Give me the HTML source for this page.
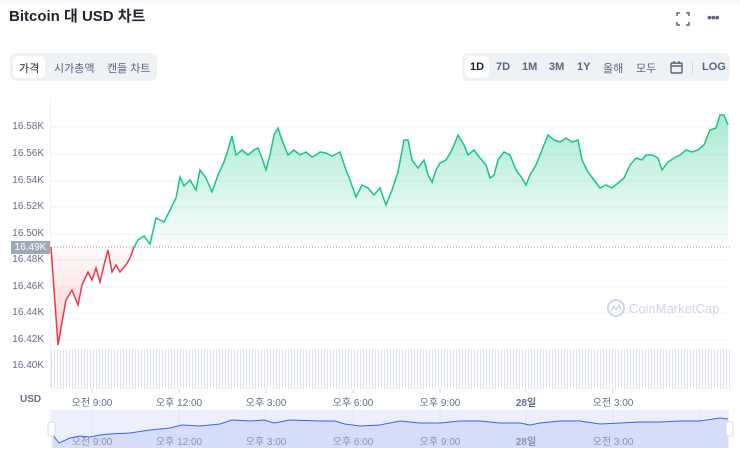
<!DOCTYPE html><html><head><meta charset="utf-8"><style>
body{margin:0;width:740px;height:454px;background:#fff;font-family:"Liberation Sans","Noto Sans CJK KR",sans-serif;position:relative;overflow:hidden;color:#222531}
.a{position:absolute}
.yl{position:absolute;left:0;width:44px;text-align:right;font-size:10px;color:#616e85}
.xl{position:absolute;top:394px;font-size:10px;color:#616e85;transform:translateX(-50%);white-space:nowrap}
.tab{position:absolute;font-size:11px;color:#58667e}
</style></head><body>
<div class="a" style="left:0;top:0;width:740px;height:6px;background:linear-gradient(#f4f4f6,#fff)"></div>
<div class="a" style="left:9px;top:5px;font-size:15px;font-weight:bold">Bitcoin 대 USD 차트</div>
<svg class="a" style="left:676px;top:12px" width="14" height="14" viewBox="0 0 14 14" fill="none" stroke="#58667e" stroke-width="1.5"><path d="M1 4V1h3M10 1h3v3M13 10v3h-3M4 13H1v-3"/></svg>
<div class="a" style="left:707px;top:9px;font-size:14px;color:#58667e;letter-spacing:-1px">•••</div>
<div class="a" style="left:10px;top:53px;width:147px;height:28px;background:#eff2f5;border-radius:6px"></div>
<div class="a" style="left:13px;top:56px;width:32px;height:22px;background:#fff;border-radius:5px"></div>
<div class="tab" style="left:19px;top:60px;color:#222531">가격</div>
<div class="tab" style="left:54px;top:60px">시가총액</div>
<div class="tab" style="left:107px;top:60px">캔들 차트</div>
<div class="a" style="left:462px;top:53px;width:268px;height:28px;background:#eff2f5;border-radius:6px"></div>
<div class="a" style="left:465px;top:56px;width:24px;height:22px;background:#fff;border-radius:5px"></div>
<div class="tab" style="left:470px;top:61px;font-weight:bold;color:#222531">1D</div>
<div class="tab" style="left:496px;top:61px;font-weight:bold">7D</div>
<div class="tab" style="left:522px;top:61px;font-weight:bold">1M</div>
<div class="tab" style="left:549px;top:61px;font-weight:bold">3M</div>
<div class="tab" style="left:577px;top:61px;font-weight:bold">1Y</div>
<div class="tab" style="left:603px;top:60px">올해</div>
<div class="tab" style="left:636px;top:60px">모두</div>
<svg class="a" style="left:670px;top:61px" width="13" height="13" viewBox="0 0 13 13" fill="none" stroke="#58667e" stroke-width="1.4"><rect x="1" y="2" width="11" height="10" rx="1"/><path d="M1 5h11M4 0v3M9 0v3"/></svg>
<div class="a" style="left:692px;top:61px;width:1px;height:13px;background:#cfd6e4"></div>
<div class="tab" style="left:702px;top:61px;font-weight:bold">LOG</div>

<div class="a" style="left:50px;top:100px;width:1px;height:290px;background:#eff2f5"></div>
<div class="yl" style="top:121px">16.58K</div><div class="yl" style="top:148px">16.56K</div><div class="yl" style="top:175px">16.54K</div><div class="yl" style="top:201px">16.52K</div><div class="yl" style="top:228px">16.50K</div><div class="yl" style="top:254px">16.48K</div><div class="yl" style="top:281px">16.46K</div><div class="yl" style="top:307px">16.44K</div><div class="yl" style="top:334px">16.42K</div><div class="yl" style="top:360px">16.40K</div>
<div class="a" style="left:11px;top:241px;width:39px;height:13px;background:#a1a7bb;color:#fff;font-size:10px;text-align:center;line-height:13px">16.49K</div>
<div class="a" style="left:51px;top:350px;width:679px;height:39px;background:repeating-linear-gradient(90deg,#dde1ea 0 1px,transparent 1px 3px)"></div>
<svg class="a" style="left:0;top:0" width="740" height="454">
<defs><linearGradient id="g" x1="0" y1="120" x2="0" y2="247" gradientUnits="userSpaceOnUse"><stop offset="0" stop-color="#16c784" stop-opacity=".35"/><stop offset="1" stop-color="#16c784" stop-opacity=".02"/></linearGradient>
<linearGradient id="r" x1="0" y1="247" x2="0" y2="345" gradientUnits="userSpaceOnUse"><stop offset="0" stop-color="#ea3943" stop-opacity=".02"/><stop offset="1" stop-color="#ea3943" stop-opacity=".25"/></linearGradient></defs>
<g stroke="#eff2f5"><path d="M51 127H730M51 154H730M51 181H730M51 207H730M51 234H730M51 260H730M51 287H730M51 313H730M51 340H730M51 366H730"/></g>
<path d="M51 247H730" stroke="#999" stroke-dasharray="1 2"/>
<polygon fill="url(#r)" points="51,247 58,345 62,322 66,300 72,290 78,305 82,285 88,272 92,280 96,268 100,282 104,265 108,250 112,272 116,265 120,272 126,265 130,258 134,247"/>
<polyline fill="none" stroke="#ea3943" stroke-width="1.5" points="51,247 58,345 62,322 66,300 72,290 78,305 82,285 88,272 92,280 96,268 100,282 104,265 108,250 112,272 116,265 120,272 126,265 130,258 134,247"/>
<polygon fill="url(#g)" points="134,247 138,240 144,236 150,244 156,218 164,222 170,210 176,198 180,177 184,186 190,180 196,190 200,170 206,178 212,192 218,175 224,162 228,150 232,136 236,155 242,150 248,155 254,150 258,148 262,158 266,170 270,155 274,135 278,128 282,140 288,155 294,150 300,155 306,152 312,157 316,155 320,152 326,153 332,156 340,152 346,170 350,180 356,197 362,185 368,188 374,195 380,188 386,205 392,190 398,172 404,140 408,140 412,160 418,168 424,160 428,175 432,182 436,170 440,163 446,160 452,150 458,135 464,145 468,155 474,150 480,158 486,165 490,178 494,175 498,160 504,152 510,155 516,170 522,178 526,185 530,175 536,165 542,150 548,135 554,140 560,142 566,138 572,142 578,140 582,160 588,172 594,180 600,188 606,185 612,188 618,183 624,178 630,165 636,158 642,160 646,155 652,155 658,158 662,170 668,162 674,158 680,155 686,150 692,152 698,150 704,145 710,130 716,128 720,115 724,115 728,125 728,247"/>
<polyline fill="none" stroke="#16c784" stroke-width="1.5" points="134,247 138,240 144,236 150,244 156,218 164,222 170,210 176,198 180,177 184,186 190,180 196,190 200,170 206,178 212,192 218,175 224,162 228,150 232,136 236,155 242,150 248,155 254,150 258,148 262,158 266,170 270,155 274,135 278,128 282,140 288,155 294,150 300,155 306,152 312,157 316,155 320,152 326,153 332,156 340,152 346,170 350,180 356,197 362,185 368,188 374,195 380,188 386,205 392,190 398,172 404,140 408,140 412,160 418,168 424,160 428,175 432,182 436,170 440,163 446,160 452,150 458,135 464,145 468,155 474,150 480,158 486,165 490,178 494,175 498,160 504,152 510,155 516,170 522,178 526,185 530,175 536,165 542,150 548,135 554,140 560,142 566,138 572,142 578,140 582,160 588,172 594,180 600,188 606,185 612,188 618,183 624,178 630,165 636,158 642,160 646,155 652,155 658,158 662,170 668,162 674,158 680,155 686,150 692,152 698,150 704,145 710,130 716,128 720,115 724,115 728,125"/>
<circle cx="616" cy="308" r="8" fill="none" stroke="#cfd6e4" stroke-width="2"/><path d="M611 311l3-5 2 4 3-5 2 5" fill="none" stroke="#cfd6e4" stroke-width="1.5"/>
<text x="629" y="313" font-size="13" fill="#cfd6e4" font-family="Liberation Sans">CoinMarketCap</text>
<g stroke="#cfd6e4"><path d="M92 389v4M179 389v4M266 389v4M353 389v4M440 389v4M526 389v4M613 389v4"/></g>
<rect x="51" y="410" width="678" height="38" fill="#edf0fc"/>
<g stroke="#dfe4f3"><path d="M92 410v38M179 410v38M266 410v38M353 410v38M440 410v38M526 410v38M613 410v38M700 410v38"/></g>
<polygon fill="#d6ddf8" points="53,435 59,443 70,438 80,436 90,437 100,435 110,434 130,433 150,430 170,428 182,425 200,426 220,424 232,420 250,421 264,420 274,423 290,420 320,421 335,421 345,424 360,426 380,425 400,421 420,423 440,423 460,421 480,421 500,423 520,423 530,425 540,423 560,421 580,421 600,424 620,423 640,422 660,422 680,421 700,421 720,418 728,419 728,448 53,448"/>
<polyline fill="none" stroke="#3861fb" stroke-width="1" points="53,435 59,443 70,438 80,436 90,437 100,435 110,434 130,433 150,430 170,428 182,425 200,426 220,424 232,420 250,421 264,420 274,423 290,420 320,421 335,421 345,424 360,426 380,425 400,421 420,423 440,423 460,421 480,421 500,423 520,423 530,425 540,423 560,421 580,421 600,424 620,423 640,422 660,422 680,421 700,421 720,418 728,419"/>
<rect x="48" y="422" width="7" height="14" rx="2" fill="#fff" stroke="#ddd"/>
<rect x="726" y="422" width="7" height="14" rx="2" fill="#fff" stroke="#ddd"/>
</svg>
<div class="a" style="left:20px;top:394px;font-size:10px;color:#616e85;font-weight:bold">USD</div>
<div class="xl" style="left:92px">오전 9:00</div><div class="xl" style="left:179px">오후 12:00</div><div class="xl" style="left:266px">오후 3:00</div><div class="xl" style="left:353px">오후 6:00</div><div class="xl" style="left:440px">오후 9:00</div><div class="xl" style="left:526px;font-weight:bold">28일</div><div class="xl" style="left:613px">오전 3:00</div>
<div class="xl" style="left:92px;top:433px;color:#8a93aa">오전 9:00</div><div class="xl" style="left:179px;top:433px;color:#8a93aa">오후 12:00</div><div class="xl" style="left:266px;top:433px;color:#8a93aa">오후 3:00</div><div class="xl" style="left:353px;top:433px;color:#8a93aa">오후 6:00</div><div class="xl" style="left:440px;top:433px;color:#8a93aa">오후 9:00</div><div class="xl" style="left:526px;top:433px;color:#8a93aa;font-weight:bold">28일</div><div class="xl" style="left:613px;top:433px;color:#8a93aa">오전 3:00</div>
</body></html>
